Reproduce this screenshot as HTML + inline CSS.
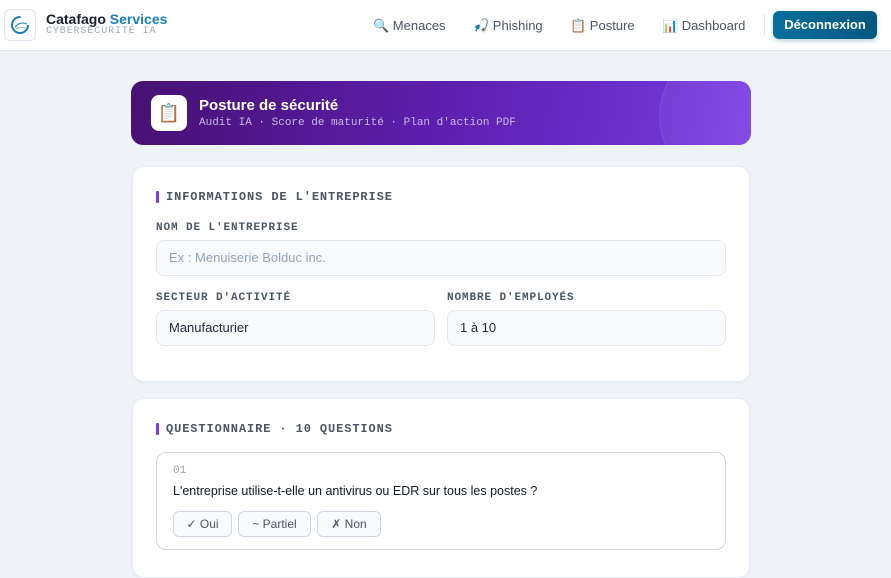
<!DOCTYPE html>
<html><head><meta charset="utf-8"><style>
*{box-sizing:border-box;margin:0;padding:0}
body{width:891px;height:557px;overflow:hidden;background:#eff3f8;font-family:"Liberation Sans",sans-serif;position:relative}
.mono{font-family:"Liberation Mono",monospace}
.nav{position:absolute;left:0;top:0;width:891px;height:51px;background:#fff;border-bottom:1px solid #e5e9f0}
.logo{position:absolute;left:4px;top:9px;width:32px;height:32px;border:1px solid #dfe5ee;border-radius:6px;background:#fff}
.brand{position:absolute;left:46px;top:11px;font-weight:bold;font-size:14px;color:#1a1f2e}
.brand span{color:#1a7fb8}
.sub{position:absolute;left:46px;top:26px;font-size:10px;letter-spacing:0.9px;color:#a0a8b8}
.nl{position:absolute;top:18px;font-size:13px;color:#4b5563}
.btn{position:absolute;left:773px;top:11px;width:104px;height:28px;border-radius:6px;background:linear-gradient(90deg,#07709e,#05577e);color:#fff;font-weight:bold;font-size:13px;text-align:center;line-height:28px;box-shadow:0 2px 5px rgba(0,80,120,.25)}
.sep{position:absolute;left:764px;top:14px;width:1px;height:22px;background:#e2e8f0}
.banner{position:absolute;left:131px;top:81px;width:620px;height:64px;border-radius:12px;background:linear-gradient(100deg,#461171 0%,#5d1fae 50%,#6b2fcc 80%,#7d40e6 100%);overflow:hidden}
.circ{position:absolute;left:528px;top:-40px;width:160px;height:150px;border-radius:50%;background:rgba(255,255,255,.06);border:1px solid rgba(255,255,255,.08)}
.ib{position:absolute;left:20px;top:14px;width:36px;height:36px;background:#fff;border-radius:8px;font-size:18px;text-align:center;line-height:36px}
.bt{position:absolute;left:68px;top:16px;color:#fff;font-weight:bold;font-size:15px}
.bs{position:absolute;left:68px;top:36px;color:#c9b6ea;font-size:11px}
.card{position:absolute;left:132px;width:618px;background:#fff;border-radius:12px;box-shadow:0 1px 3px rgba(0,0,0,.05);border:1px solid #e8edf3}
.st{position:absolute;left:23px;font-size:12px;font-weight:bold;letter-spacing:0.9px;color:#4b5563;padding-left:10px}
.st:before{content:"";position:absolute;left:0;top:1px;width:3px;height:12px;background:#7c3aed;border-radius:1px}
.lb{position:absolute;font-size:11px;font-weight:bold;letter-spacing:0.9px;color:#4b5563}
.in{position:absolute;height:36px;background:#f8fafc;border:1px solid #e2e8f0;border-radius:8px;font-size:13px;color:#1f2937;padding-left:12px;line-height:34px}
.q{position:absolute;left:23px;top:53px;width:570px;height:98px;border:1px solid #cfd6e0;border-radius:10px}
.ob{position:absolute;top:58px;height:26px;border:1px solid #cfd6e0;border-radius:6px;background:#f8fafc;font-size:12px;color:#4b5563;text-align:center;line-height:24px}
</style></head><body>
<div class="nav">
<div class="logo"><svg width="30" height="30" viewBox="0 0 30 30"><circle cx="15" cy="15" r="8" fill="none" stroke="#1a7fb8" stroke-width="2" stroke-dasharray="38 12"/><path d="M10 17 q5-6 12-3" stroke="#1a7fb8" fill="none"/><path d="M11 19 q6-3 11 0" stroke="#7aa" fill="none" stroke-width=".7"/></svg></div>
<div class="brand">Catafago <span>Services</span></div>
<div class="sub mono">CYBERSÉCURITÉ IA</div>
<div class="nl" style="left:373px">🔍 Menaces</div>
<div class="nl" style="left:473px">🎣 Phishing</div>
<div class="nl" style="left:570px">📋 Posture</div>
<div class="nl" style="left:662px">📊 Dashboard</div>
<div class="sep"></div>
<div class="btn">Déconnexion</div>
</div>
<div class="banner"><div class="circ"></div><div class="ib">📋</div><div class="bt">Posture de sécurité</div><div class="bs mono">Audit IA · Score de maturité · Plan d'action PDF</div></div>
<div class="card" style="top:166px;height:216px">
<div class="st mono" style="top:23px">INFORMATIONS DE L'ENTREPRISE</div>
<div class="lb mono" style="left:23px;top:55px">NOM DE L'ENTREPRISE</div>
<div class="in" style="left:23px;top:73px;width:570px;color:#94a3b8">Ex : Menuiserie Bolduc inc.</div>
<div class="lb mono" style="left:23px;top:125px">SECTEUR D'ACTIVITÉ</div>
<div class="lb mono" style="left:314px;top:125px">NOMBRE D'EMPLOYÉS</div>
<div class="in" style="left:23px;top:143px;width:279px">Manufacturier</div>
<div class="in" style="left:314px;top:143px;width:279px">1 à 10</div>
</div>
<div class="card" style="top:398px;height:180px">
<div class="st mono" style="top:23px">QUESTIONNAIRE · 10 QUESTIONS</div>
<div class="q">
<div class="mono" style="position:absolute;left:16px;top:12px;font-size:11px;color:#9ca3af">01</div>
<div style="position:absolute;left:16px;top:31px;font-size:12.5px;color:#111827">L'entreprise utilise-t-elle un antivirus ou EDR sur tous les postes ?</div>
<div class="ob" style="left:16px;width:59px">✓ Oui</div>
<div class="ob" style="left:81px;width:73px">~ Partiel</div>
<div class="ob" style="left:160px;width:64px">✗ Non</div>
</div>
</div>
</body></html>
